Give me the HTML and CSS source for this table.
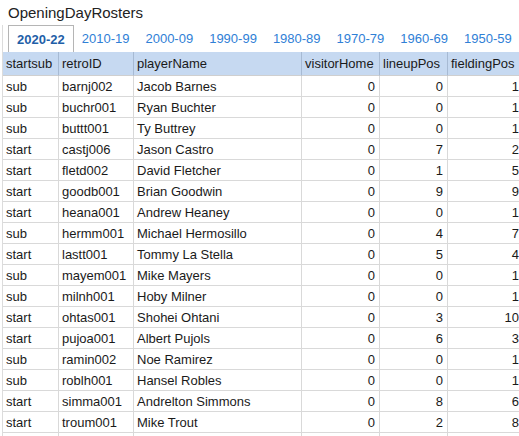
FILE: index.html
```html
<!DOCTYPE html>
<html lang="en">
<head>
<meta charset="utf-8">
<title>OpeningDayRosters</title>
<link rel="stylesheet" href="styles.css">
</head>
<body>
<div class="app">
  <h1 class="title">OpeningDayRosters</h1>
  <div class="panel">
    <nav class="tabs">
      <span class="tab active">2020-22</span>
      <span class="tab">2010-19</span>
      <span class="tab">2000-09</span>
      <span class="tab">1990-99</span>
      <span class="tab">1980-89</span>
      <span class="tab">1970-79</span>
      <span class="tab">1960-69</span>
      <span class="tab">1950-59</span>
    </nav>
    <div class="grid">
      <div class="th">startsub</div><div class="th">retroID</div><div class="th">playerName</div><div class="th">visitorHome</div><div class="th">lineupPos</div><div class="th">fieldingPos</div>

      <div class="td">sub</div><div class="td">barnj002</div><div class="td">Jacob Barnes</div><div class="td num">0</div><div class="td num">0</div><div class="td num">1</div>
      <div class="td">sub</div><div class="td">buchr001</div><div class="td">Ryan Buchter</div><div class="td num">0</div><div class="td num">0</div><div class="td num">1</div>
      <div class="td">sub</div><div class="td">buttt001</div><div class="td">Ty Buttrey</div><div class="td num">0</div><div class="td num">0</div><div class="td num">1</div>
      <div class="td">start</div><div class="td">castj006</div><div class="td">Jason Castro</div><div class="td num">0</div><div class="td num">7</div><div class="td num">2</div>
      <div class="td">start</div><div class="td">fletd002</div><div class="td">David Fletcher</div><div class="td num">0</div><div class="td num">1</div><div class="td num">5</div>
      <div class="td">start</div><div class="td">goodb001</div><div class="td">Brian Goodwin</div><div class="td num">0</div><div class="td num">9</div><div class="td num">9</div>
      <div class="td">start</div><div class="td">heana001</div><div class="td">Andrew Heaney</div><div class="td num">0</div><div class="td num">0</div><div class="td num">1</div>
      <div class="td">sub</div><div class="td">hermm001</div><div class="td">Michael Hermosillo</div><div class="td num">0</div><div class="td num">4</div><div class="td num">7</div>
      <div class="td">start</div><div class="td">lastt001</div><div class="td">Tommy La Stella</div><div class="td num">0</div><div class="td num">5</div><div class="td num">4</div>
      <div class="td">sub</div><div class="td">mayem001</div><div class="td">Mike Mayers</div><div class="td num">0</div><div class="td num">0</div><div class="td num">1</div>
      <div class="td">sub</div><div class="td">milnh001</div><div class="td">Hoby Milner</div><div class="td num">0</div><div class="td num">0</div><div class="td num">1</div>
      <div class="td">start</div><div class="td">ohtas001</div><div class="td">Shohei Ohtani</div><div class="td num">0</div><div class="td num">3</div><div class="td num">10</div>
      <div class="td">start</div><div class="td">pujoa001</div><div class="td">Albert Pujols</div><div class="td num">0</div><div class="td num">6</div><div class="td num">3</div>
      <div class="td">sub</div><div class="td">ramin002</div><div class="td">Noe Ramirez</div><div class="td num">0</div><div class="td num">0</div><div class="td num">1</div>
      <div class="td">sub</div><div class="td">roblh001</div><div class="td">Hansel Robles</div><div class="td num">0</div><div class="td num">0</div><div class="td num">1</div>
      <div class="td">start</div><div class="td">simma001</div><div class="td">Andrelton Simmons</div><div class="td num">0</div><div class="td num">8</div><div class="td num">6</div>
      <div class="td">start</div><div class="td">troum001</div><div class="td">Mike Trout</div><div class="td num">0</div><div class="td num">2</div><div class="td num">8</div>
      <div class="td"></div><div class="td"></div><div class="td"></div><div class="td num"></div><div class="td num"></div><div class="td num"></div>
    </div>
  </div>
</div>
</body>
</html>
```
FILE: styles.css
```css
html, body {
  margin: 0;
  padding: 0;
  overflow: hidden;
  background: #ffffff;
}

body {
  font-family: "Liberation Sans", Arial, sans-serif;
  font-size: 13px;
  color: #1a1a1a;
}

.app {
  padding-top: 4px;
}

.title {
  margin: 0 0 3px 8px;
  font-size: 15px;
  font-weight: normal;
  line-height: 18px;
  color: #222222;
}

.panel {
  margin-left: 2px;
  border-left: 1px solid #dcdcdc;
}

.tabs {
  display: flex;
  padding-left: 5px;
}

.tab {
  padding: 6px 8px 4px;
  line-height: 16px;
  color: #2f80d6;
  white-space: nowrap;
}

.tab.active {
  border: 1px solid #b5b5b5;
  border-bottom: none;
  color: #1f5fa8;
  font-weight: bold;
}

.grid {
  display: grid;
  grid-template-columns: 56px 75px 168px 78px 68px 76px;
  width: 521px;
}

.th,
.td {
  box-sizing: border-box;
  padding: 2px 4px 0 3px;
  line-height: 18px;
  height: 21px;
  white-space: nowrap;
  overflow: hidden;
  border-right: 1px solid #d9d9d9;
  border-bottom: 1px solid #d9d9d9;
}

.th {
  height: 24px;
  padding-top: 3px;
  background: #c6d9f1;
  border-right-color: #a7bad3;
  border-bottom-color: #cfcfcf;
  color: #1a1a1a;
}

.td:nth-child(6n+2),
.th:nth-child(6n+2),
.td:nth-child(6n+3),
.th:nth-child(6n+3),
.td:nth-child(6n+4),
.th:nth-child(6n+4),
.td:nth-child(6n+5),
.th:nth-child(6n+5),
.td:nth-child(6n),
.th:nth-child(6n) {
  padding-left: 3px;
}

.num {
  text-align: right;
  padding-right: 4px;
}
```
